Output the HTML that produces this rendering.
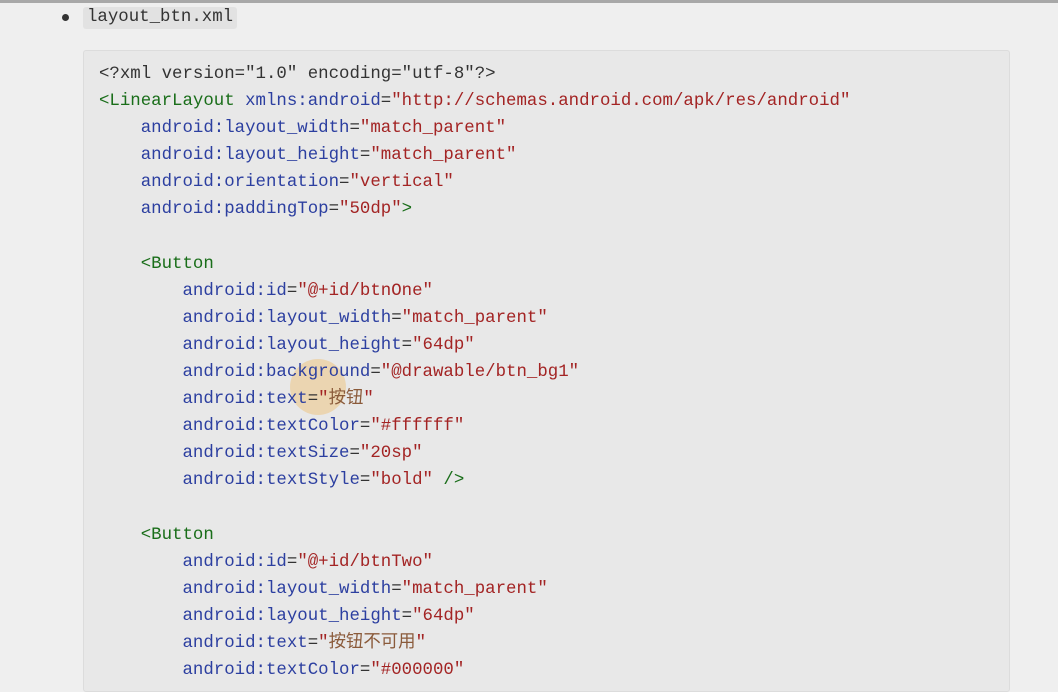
<!DOCTYPE html>
<html><head><meta charset="utf-8"><style>
html,body{margin:0;width:1058px;height:681px;overflow:hidden;background:#efefef;font-family:"Liberation Mono","Noto Sans CJK SC",monospace;}
.top{position:absolute;left:0;top:0;width:1058px;height:3px;background:#a8a8a8}
.bullet{position:absolute;left:62px;top:14px;width:7px;height:7px;border-radius:50%;background:#333}
.inl{position:absolute;left:83px;top:7px;height:22px;padding:0 4px;background:#e2e2e2;border-radius:3px;font-size:17.4px;line-height:22px;color:#333}
.code{position:absolute;left:83px;top:50px;width:925px;height:640px;background:#e8e8e8;border:1px solid #dcdcdc;border-radius:3px}
pre{margin:0;position:absolute;left:99px;top:61px;font-family:inherit;font-size:17.4px;line-height:27.1px;color:#333}
.t{color:#1a6e1a}.a{color:#2c3fa0}.s{color:#a32424}.c{color:#8a5a3a}
.hl{position:absolute;left:290px;top:359px;width:56px;height:56px;border-radius:50%;background:rgba(240,190,110,.45)}
</style></head><body>
<div class="top"></div>
<div class="bullet"></div>
<div class="inl">layout_btn.xml</div>
<div class="code"></div>
<div class="hl"></div>
<pre>&lt;?xml version="1.0" encoding="utf-8"?&gt;
<span class="t">&lt;LinearLayout</span> <span class="a">xmlns:android</span>=<span class="s">"http://schemas.android.com/apk/res/android"</span>
    <span class="a">android:layout_width</span>=<span class="s">"match_parent"</span>
    <span class="a">android:layout_height</span>=<span class="s">"match_parent"</span>
    <span class="a">android:orientation</span>=<span class="s">"vertical"</span>
    <span class="a">android:paddingTop</span>=<span class="s">"50dp"</span><span class="t">&gt;</span>

    <span class="t">&lt;Button</span>
        <span class="a">android:id</span>=<span class="s">"@+id/btnOne"</span>
        <span class="a">android:layout_width</span>=<span class="s">"match_parent"</span>
        <span class="a">android:layout_height</span>=<span class="s">"64dp"</span>
        <span class="a">android:background</span>=<span class="s">"@drawable/btn_bg1"</span>
        <span class="a">android:text</span>=<span class="s">"<span class="c">按钮</span>"</span>
        <span class="a">android:textColor</span>=<span class="s">"#ffffff"</span>
        <span class="a">android:textSize</span>=<span class="s">"20sp"</span>
        <span class="a">android:textStyle</span>=<span class="s">"bold"</span> <span class="t">/&gt;</span>

    <span class="t">&lt;Button</span>
        <span class="a">android:id</span>=<span class="s">"@+id/btnTwo"</span>
        <span class="a">android:layout_width</span>=<span class="s">"match_parent"</span>
        <span class="a">android:layout_height</span>=<span class="s">"64dp"</span>
        <span class="a">android:text</span>=<span class="s">"<span class="c">按钮不可用</span>"</span>
        <span class="a">android:textColor</span>=<span class="s">"#000000"</span>
</pre>
</body></html>
